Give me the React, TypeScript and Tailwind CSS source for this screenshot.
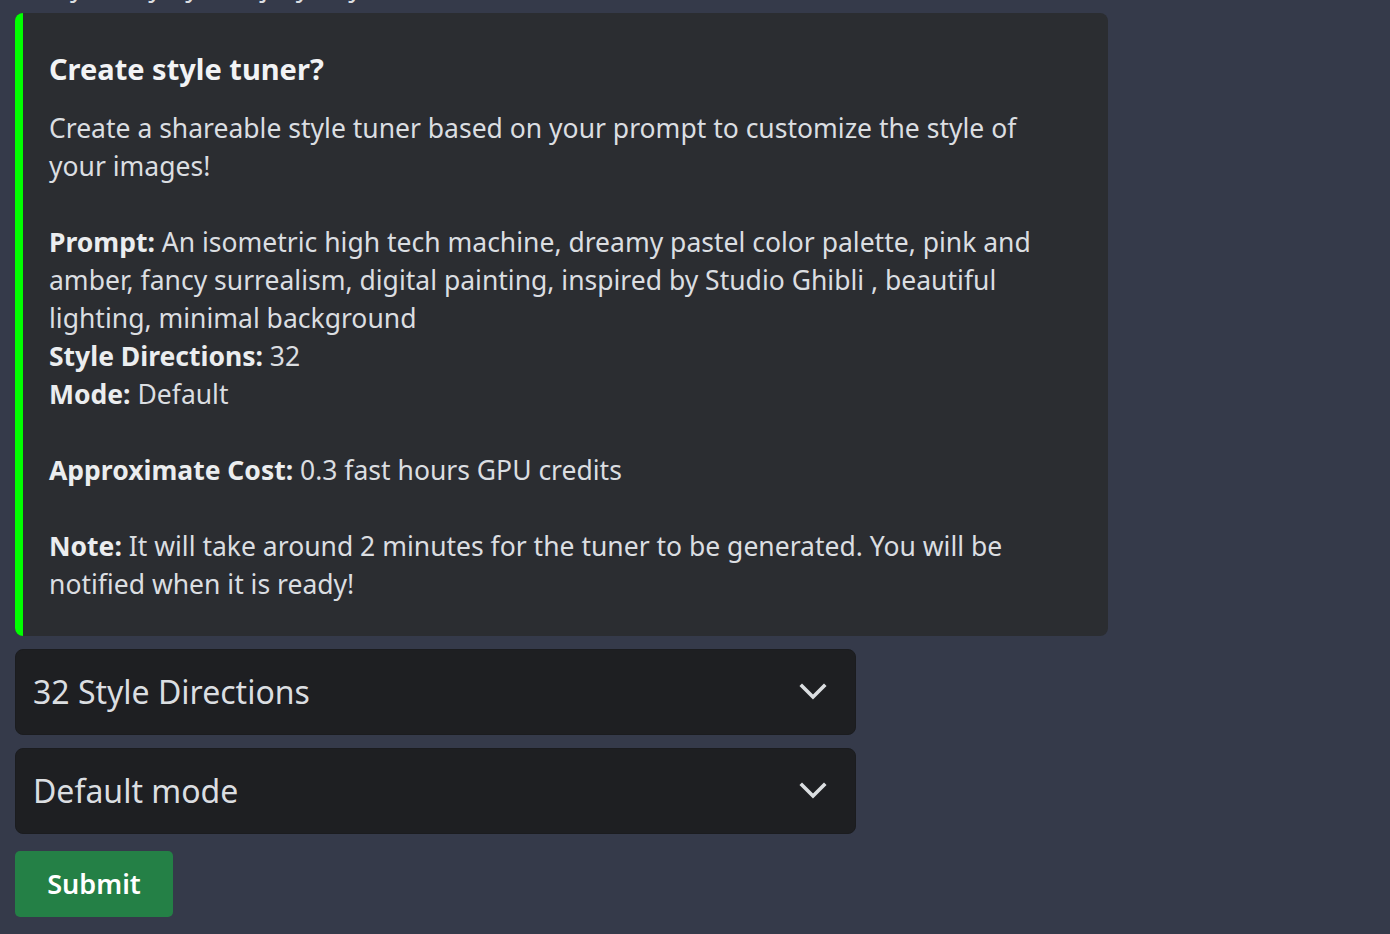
const font = { fontFamily: '"Noto Sans", "Open Sans", sans-serif' }

function Chevron() {
  return (
    <svg width="28" height="18" viewBox="0 0 28 18" fill="none" className="text-[#dbdee1]">
      <polyline points="3,3 14,14 25,3" stroke="currentColor" strokeWidth="3.6" strokeLinecap="square" strokeLinejoin="miter" />
    </svg>
  )
}

function Select({ label }: { label: string }) {
  return (
    <div className="flex h-[86px] w-[841px] items-center justify-between rounded-[8px] border border-[#1b1c1f] bg-[#1e1f22] pl-[17px] pr-[28px]">
      <span className="text-[32px] text-[#dbdee1]">{label}</span>
      <Chevron />
    </div>
  )
}

export default function App() {
  return (
    <div className="min-h-[934px] w-full overflow-hidden bg-[#353a4a]" style={font}>
      <div className="-mt-[33px] pl-[30px] text-[27px] leading-[38px] text-[#dbdee1]">
        fully ready by ____ jury day
      </div>
      <div className="ml-[15px] mt-[8px] flex w-[1093px] overflow-hidden rounded-[8px] bg-[#2b2d31]">
        <div className="w-[8px] shrink-0 bg-[#00ff00]" />
        <div className="pl-[26px] pr-[30px] pt-[37px] pb-[33px] text-[26.5px] leading-[38px] text-[#dbdee1]">
          <div className="mb-[21px] text-[29px] font-bold leading-[38px] text-[#f2f3f5]">Create style tuner?</div>
          <p>
            Create a shareable style tuner based on your prompt to customize the style of
            <br />
            your images!
          </p>
          <br />
          <p>
            <b className="text-[#ebedef]">Prompt:</b> An isometric high tech machine, dreamy pastel color palette, pink and
            <br />
            amber, fancy surrealism, digital painting, inspired by Studio Ghibli , beautiful
            <br />
            lighting, minimal background
            <br />
            <b className="text-[#ebedef]">Style Directions:</b> 32
            <br />
            <b className="text-[#ebedef]">Mode:</b> Default
          </p>
          <br />
          <p>
            <b className="text-[#ebedef]">Approximate Cost:</b> 0.3 fast hours GPU credits
          </p>
          <br />
          <p>
            <b className="text-[#ebedef]">Note:</b> It will take around 2 minutes for the tuner to be generated. You will be
            <br />
            notified when it is ready!
          </p>
        </div>
      </div>
      <div className="ml-[15px] mt-[13px] flex flex-col gap-[13px]">
        <Select label="32 Style Directions" />
        <Select label="Default mode" />
        <button className="mt-[4px] h-[66px] w-[158px] rounded-[5px] bg-[#248046] text-[27px] font-semibold text-white">
          Submit
        </button>
      </div>
    </div>
  )
}
